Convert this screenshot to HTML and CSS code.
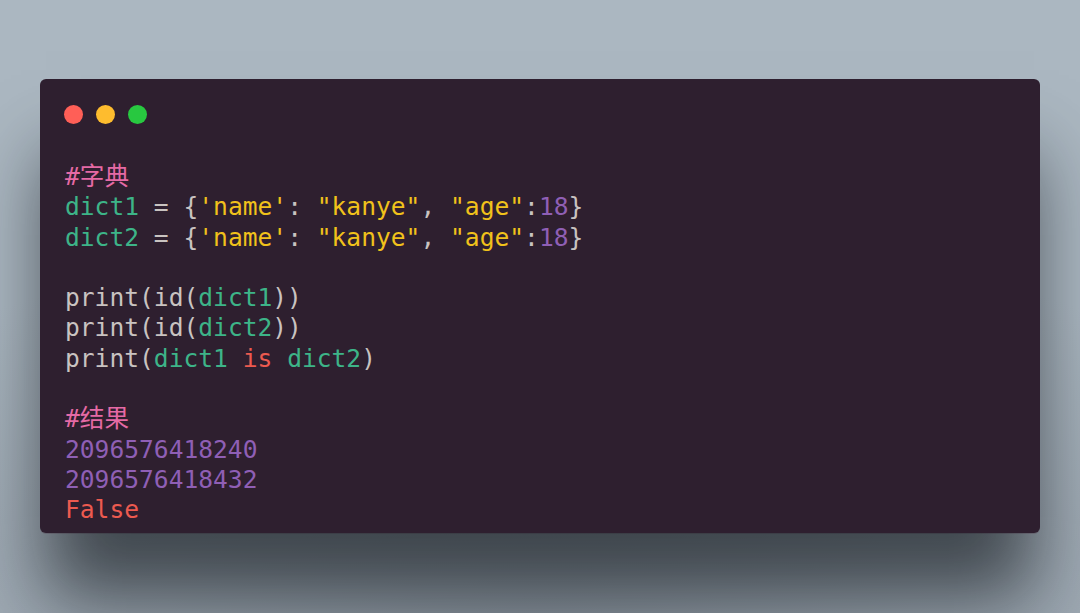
FILE: index.html
```html
<!DOCTYPE html>
<html lang="zh">
<head>
<meta charset="utf-8">
<link rel="stylesheet" href="styles.css">
</head>
<body>
<div class="stage">
  <div class="window">
    <div class="lights">
      <span class="dot red"></span>
      <span class="dot yellow"></span>
      <span class="dot green"></span>
    </div>
    <pre class="code"><span class="c">#字典</span>
<span class="v">dict1</span> = {<span class="s">'name'</span>: <span class="s">"kanye"</span>, <span class="s">"age"</span>:<span class="n">18</span>}
<span class="v">dict2</span> = {<span class="s">'name'</span>: <span class="s">"kanye"</span>, <span class="s">"age"</span>:<span class="n">18</span>}

print(id(<span class="v">dict1</span>))
print(id(<span class="v">dict2</span>))
print(<span class="v">dict1</span> <span class="k">is</span> <span class="v">dict2</span>)

<span class="c">#结果</span>
<span class="n">2096576418240</span>
<span class="n">2096576418432</span>
<span class="k">False</span></pre>
  </div>
</div>
</body>
</html>
```
FILE: styles.css
```css
html, body {
  margin: 0;
  padding: 0;
}
body {
  width: 1080px;
  height: 613px;
  overflow: hidden;
  background: radial-gradient(ellipse 900px 420px at 50% 105%, #8a949e 0%, #9ea9b3 60%, #abb7c1 100%), #abb7c1;
}
.stage {
  padding: 79px 40px 0 40px;
}
.window {
  height: 454px;
  box-sizing: border-box;
  background: #2e1f2f;
  border-radius: 6px;
  box-shadow: 0 70px 70px -6px rgba(10, 14, 20, 0.62), 0 1px 0 rgba(120, 100, 120, 0.4);
  padding: 26px 26px 0 24px;
  overflow: hidden;
}
.lights {
  display: flex;
  gap: 13px;
}
.dot {
  width: 19px;
  height: 19px;
  border-radius: 50%;
  display: block;
}
.red { background: #ff5f57; }
.yellow { background: #febc2e; }
.green { background: #28c840; }
.code {
  margin: 38px 0 0 1px;
  font-family: "DejaVu Sans Mono", "Noto Sans CJK SC", monospace;
  font-size: 24.6px;
  line-height: 30.3px;
  color: #c9c3c1;
}
.c { color: #e56aa5; }
.v { color: #3db488; }
.s { color: #f1c21b; }
.n { color: #8f5fb5; }
.k { color: #ec5a4f; }
```
